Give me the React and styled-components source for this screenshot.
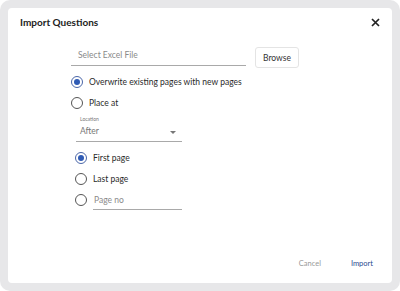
import React from 'react'
import styled, { createGlobalStyle } from 'styled-components'

const GlobalStyle = createGlobalStyle`
  html, body {
    margin: 0;
    padding: 0;
    background: #ffffff;
  }
  body {
    font-family: Lato, "Open Sans", sans-serif;
  }
`

const Frame = styled.div`
  width: 400px;
  height: 291px;
  box-sizing: border-box;
  padding: 8px;
  background: #e7e7e9;
  border-radius: 10px;
`

const Dialog = styled.div`
  height: 100%;
  box-sizing: border-box;
  background: #fff;
  border-radius: 4px;
  display: flex;
  flex-direction: column;
  padding: 6px 12px 11px 12px;
`

const Header = styled.div`
  display: flex;
  justify-content: space-between;
  align-items: center;
  height: 16px;
`

const Title = styled.div`
  font-weight: 700;
  font-size: 10px;
  color: #222;
`

const Close = styled.button`
  border: 0;
  background: none;
  padding: 0;
  width: 9px;
  height: 9px;
  display: flex;
  align-items: center;
  justify-content: center;
  cursor: pointer;
`

const Body = styled.div`
  flex: 1;
  display: flex;
  flex-direction: column;
  padding-left: ${p => p.indent}px;
`

const FileRow = styled.div`
  display: flex;
  align-items: center;
  gap: 9px;
  margin-top: 13px;
`

const UnderlineInput = styled.div`
  width: ${p => p.width}px;
  height: 20px;
  box-sizing: border-box;
  border-bottom: 1px solid #a9a9a9;
  padding-left: ${p => p.pad || 0}px;
  font-size: 8.5px;
  color: #8a8a8a;
  display: flex;
  align-items: center;
`

const Button = styled.button`
  height: 21px;
  padding: 0 7px;
  border: 1px solid #e4e4e4;
  border-radius: 3px;
  background: #fff;
  font-family: inherit;
  font-size: 8.5px;
  color: #333;
  margin-top: 4px;
`

const Radios = styled.div`
  display: flex;
  flex-direction: column;
  gap: ${p => p.gap}px;
  margin-top: ${p => p.top}px;
  padding-left: ${p => p.indent || 0}px;
`

const RadioRow = styled.label`
  display: flex;
  align-items: center;
  gap: 6px;
  font-size: 8.5px;
  color: #2a2a2a;
  height: 14px;
`

const Circle = styled.span`
  width: 12px;
  height: 12px;
  box-sizing: border-box;
  border-radius: 50%;
  border: 1.1px solid ${p => (p.checked ? '#4a66a8' : '#555')};
  display: flex;
  align-items: center;
  justify-content: center;
  flex-shrink: 0;

  &::after {
    content: '';
    width: 6px;
    height: 6px;
    border-radius: 50%;
    background: ${p => (p.checked ? '#2f5bb5' : 'transparent')};
  }
`

const Select = styled.div`
  width: 106px;
  margin: 6px 0 0 5px;
  border-bottom: 1px solid #a9a9a9;
  padding: 0 0 5px 4px;
  box-sizing: border-box;
`

const SmallLabel = styled.div`
  font-size: 5px;
  color: #777;
`

const SelectValue = styled.div`
  display: flex;
  justify-content: space-between;
  align-items: center;
  font-size: 8.5px;
  color: #777;
  margin-top: 4px;
  padding-right: 6px;
`

const Caret = styled.span`
  width: 0;
  height: 0;
  border-left: 3px solid transparent;
  border-right: 3px solid transparent;
  border-top: 3px solid #777;
  margin-top: 3px;
`

const Footer = styled.div`
  display: flex;
  justify-content: flex-end;
  gap: 30px;
  padding-right: 7px;
  padding-bottom: 4px;
`

const TextButton = styled.button`
  border: 0;
  background: none;
  padding: 0;
  font-family: inherit;
  font-size: 7.5px;
  color: ${p => (p.primary ? '#2b4a8f' : '#999')};
`

const Radio = ({ checked, children }) => (
  <RadioRow>
    <Circle checked={checked} />
    {children}
  </RadioRow>
)

export default function App() {
  return (
    <>
      <GlobalStyle />
      <Frame>
        <Dialog>
          <Header>
            <Title>Import Questions</Title>
            <Close aria-label="Close">
              <svg width="9" height="9" viewBox="0 0 9 9">
                <path d="M1 1L8 8M8 1L1 8" stroke="#222" strokeWidth="1.7" />
              </svg>
            </Close>
          </Header>
          <Body indent={51}>
            <FileRow>
              <UnderlineInput width={175} pad={7}>Select Excel File</UnderlineInput>
              <Button>Browse</Button>
            </FileRow>
            <Radios gap={7} top={7}>
              <Radio checked>Overwrite existing pages with new pages</Radio>
              <Radio>Place at</Radio>
            </Radios>
            <Select>
              <SmallLabel>Location</SmallLabel>
              <SelectValue>
                After
                <Caret />
              </SelectValue>
            </Select>
            <Radios gap={7} top={9} indent={4}>
              <Radio checked>First page</Radio>
              <Radio>Last page</Radio>
              <Radio>
                <UnderlineInput width={89} pad={1}>Page no</UnderlineInput>
              </Radio>
            </Radios>
          </Body>
          <Footer>
            <TextButton>Cancel</TextButton>
            <TextButton primary>Import</TextButton>
          </Footer>
        </Dialog>
      </Frame>
    </>
  )
}
